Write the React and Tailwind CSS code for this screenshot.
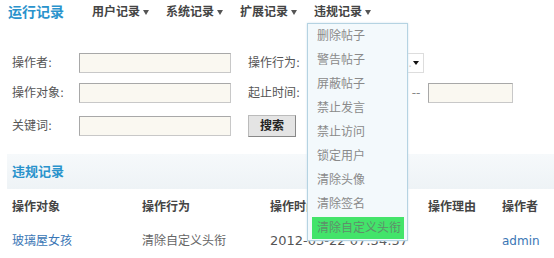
import React from "react";

const navItems = ["用户记录", "系统记录", "扩展记录", "违规记录"];
const menuItems = [
  "删除帖子",
  "警告帖子",
  "屏蔽帖子",
  "禁止发言",
  "禁止访问",
  "锁定用户",
  "清除头像",
  "清除签名",
  "清除自定义头衔",
];

const font = { fontFamily: '"DejaVu Sans", "Noto Sans CJK SC", sans-serif' };

const inputClass =
  "h-[20px] bg-[#faf8f1] border border-[#c8c8c8] border-t-[#a8a8a8] border-l-[#a8a8a8]";

const App = () => {
  return (
    <div
      className="relative w-[554px] h-[258px] overflow-hidden bg-white text-[12px] text-[#555]"
      style={font}
    >
      {/* Top nav */}
      <div className="flex items-center h-[24px] pl-[8px]">
        <span className="w-[84px] text-[14px] font-bold text-[#2a93cc]">运行记录</span>
        {navItems.map((item) => (
          <span key={item} className="w-[74px] flex items-center text-[12px] font-bold text-[#444]">
            {item}
            <span className="ml-[3px] w-0 h-0 border-l-[3px] border-r-[3px] border-t-[5px] border-l-transparent border-r-transparent border-t-[#555]" />
          </span>
        ))}
      </div>

      {/* Search form */}
      <div className="mt-[29px] pl-[12px] flex flex-col">
        <div className="flex items-center h-[20px]">
          <span className="w-[67px]">操作者:</span>
          <div className={`w-[152px] ${inputClass}`} />
          <span className="ml-[17px] w-[88px]">操作行为:</span>
          <div className="w-[88px] h-[20px] border border-[#ddd] bg-white flex items-center justify-between pl-[3px] pr-[4px] text-[#ccc]">
            <span className="truncate">清除自定义头衔</span>
            <span className="shrink-0 w-0 h-0 border-l-[3px] border-r-[3px] border-t-[4px] border-l-transparent border-r-transparent border-t-[#111]" />
          </div>
        </div>
        <div className="flex items-center h-[20px] mt-[10px]">
          <span className="w-[67px]">操作对象:</span>
          <div className={`w-[152px] ${inputClass}`} />
          <span className="ml-[17px] w-[88px]">起止时间:</span>
          <div className={`w-[68px] ${inputClass}`} />
          <span className="w-[24px] text-center text-[#888]">--</span>
          <div className={`w-[85px] ${inputClass}`} />
        </div>
        <div className="flex items-center h-[22px] mt-[12px]">
          <span className="w-[67px]">关键词:</span>
          <div className={`w-[152px] ${inputClass}`} />
          <button className="ml-[17px] w-[48px] h-[22px] bg-[#e4e4e4] border border-[#bbb] border-r-[#888] border-b-[#888] text-[#222] text-[12px] font-bold">
            搜索
          </button>
        </div>
      </div>

      {/* Section bar */}
      <div className="mt-[17px] ml-[7px] h-[35px] flex items-center pl-[5px] bg-gradient-to-b from-[#f6f9fb] to-[#eef3f6]">
        <span className="text-[13px] font-bold text-[#2a93cc]">违规记录</span>
      </div>

      {/* Table */}
      <div className="pl-[12px]">
        <div className="flex items-center h-[36px] font-bold text-[#444] text-[12px]">
          <span className="w-[130px]">操作对象</span>
          <span className="w-[128px]">操作行为</span>
          <span className="w-[158px]">操作时间</span>
          <span className="w-[74px]">操作理由</span>
          <span>操作者</span>
        </div>
        <div className="flex items-center h-[32px]">
          <span className="w-[130px] text-[#3a76b5]">玻璃屋女孩</span>
          <span className="w-[128px] text-[#666]">清除自定义头衔</span>
          <span className="w-[158px] text-[13px] text-[#555]">2012-03-22 07:34:57</span>
          <span className="w-[74px]" />
          <span className="text-[#3a76b5]">admin</span>
        </div>
      </div>

      {/* Dropdown menu */}
      <div className="absolute left-[307px] top-[23px] w-[101px] border border-[#b5d3e2] bg-[#f3f9fc] shadow-[0_0_2px_#cfe3ee]">
        {menuItems.map((item, i) =>
          i === menuItems.length - 1 ? (
            <div key={item} className="h-[24px] flex items-center pl-[4px] pr-[3px]">
              <span className="flex-1 h-[22px] flex items-center pl-[5px] bg-[#43e46a] text-[#5f8f6a]">
                {item}
              </span>
            </div>
          ) : (
            <div key={item} className="h-[24px] flex items-center pl-[9px] text-[#8a8a8a]">
              {item}
            </div>
          )
        )}
      </div>
    </div>
  );
};

export default App;
